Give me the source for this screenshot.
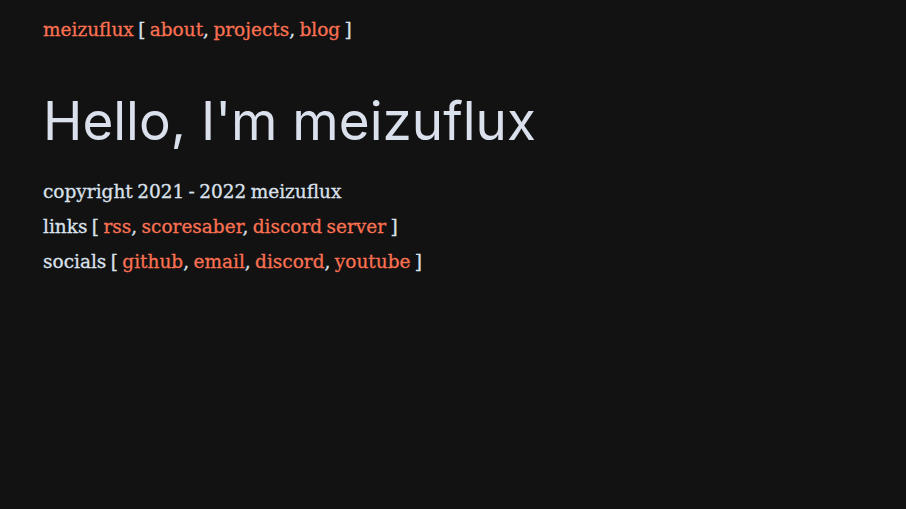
import React from "react";

const A = ({ children }: { children: React.ReactNode }) => (
  <a className="text-[#fa7152]">{children}</a>
);

export default function App() {
  return (
    <div className="min-h-[509px] w-full bg-[#121212] text-[#dbe1ec] px-[43px] pt-[15px] font-['DejaVu_Serif',serif] text-[18.5px] [word-spacing:-1.5px] [-webkit-text-stroke:0.3px_currentColor]">
      <nav className="leading-[30px]">
        <A>meizuflux</A> [ <A>about</A>, <A>projects</A>, <A>blog</A> ]
      </nav>
      <h1 className="mt-[46px] font-['Inter',sans-serif] text-[53px] leading-[60px] font-normal [word-spacing:0px] [-webkit-text-stroke:0px]">
        Hello, I&apos;m meizuflux
      </h1>
      <div className="mt-[23px] leading-[35px]">
        <p>copyright 2021 - 2022 meizuflux</p>
        <p>
          links [ <A>rss</A>, <A>scoresaber</A>, <A>discord server</A> ]
        </p>
        <p>
          socials [ <A>github</A>, <A>email</A>, <A>discord</A>, <A>youtube</A> ]
        </p>
      </div>
    </div>
  );
}
